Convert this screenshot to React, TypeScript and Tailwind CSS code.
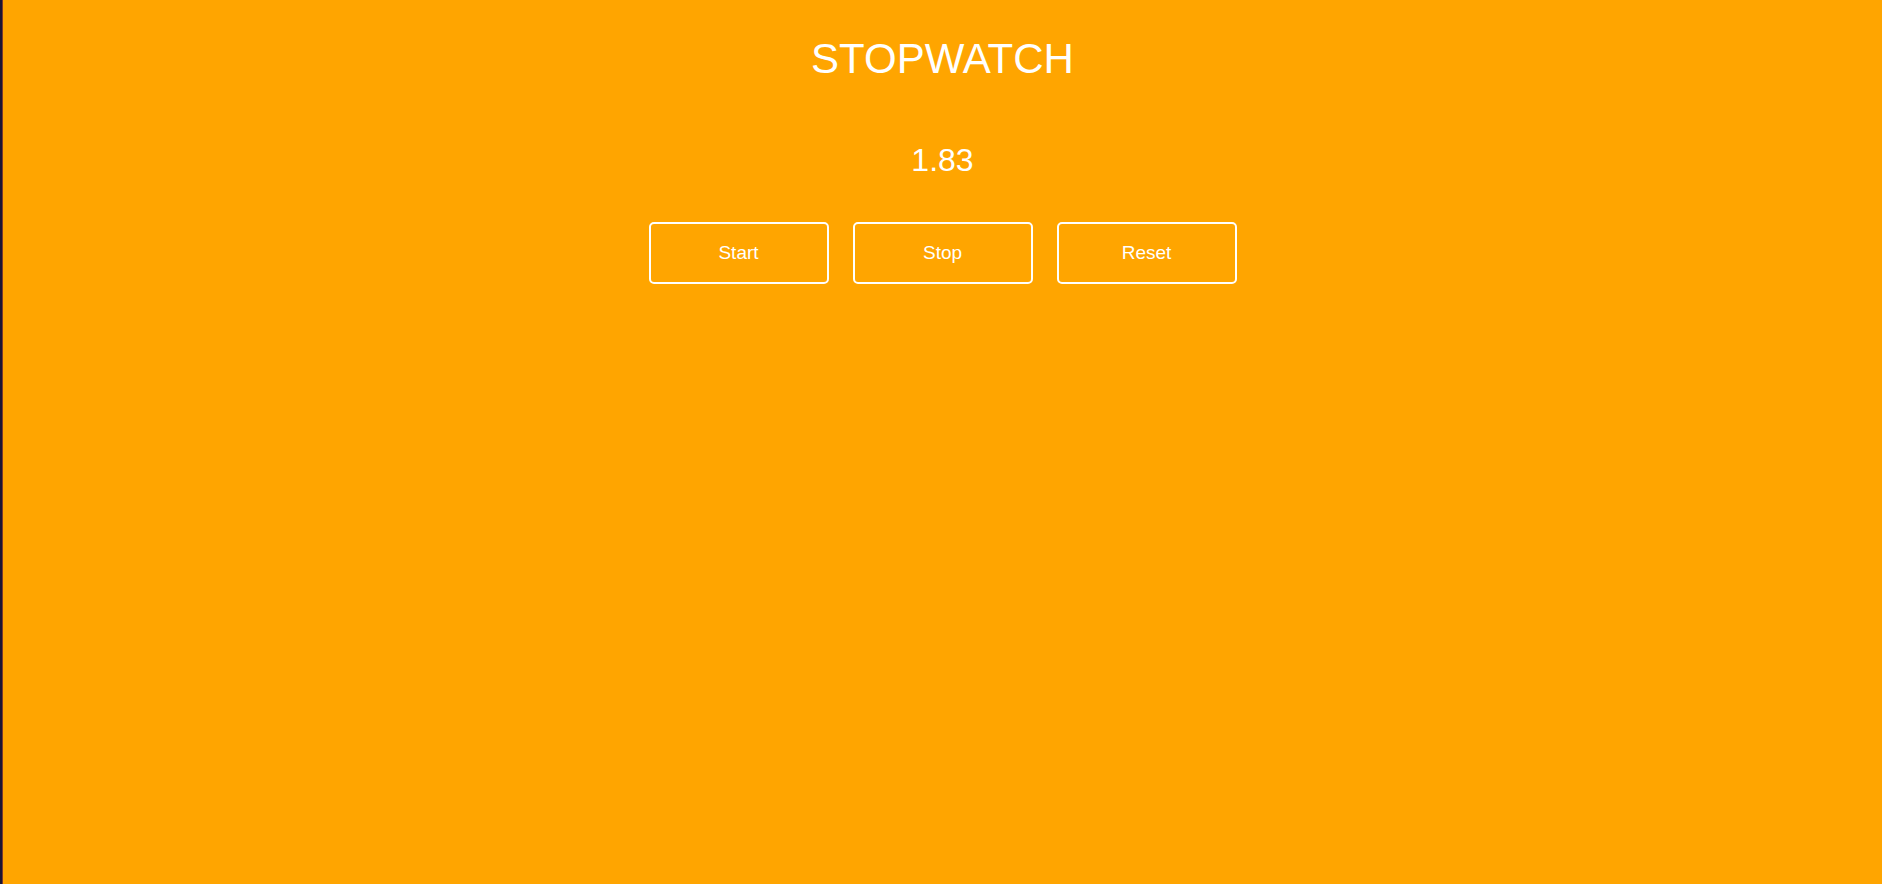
import { useState, useEffect, useRef } from 'react'

export default function App() {
  const [time, setTime] = useState(1.83)
  const [running, setRunning] = useState(false)
  const timer = useRef<number | null>(null)

  useEffect(() => {
    if (running) {
      timer.current = window.setInterval(() => {
        setTime((t) => Math.round((t + 0.01) * 100) / 100)
      }, 10)
    }
    return () => {
      if (timer.current) window.clearInterval(timer.current)
    }
  }, [running])

  const buttonClass =
    'w-[180px] h-[62px] border-2 border-white rounded-[5px] text-white text-[19px] bg-transparent hover:bg-white/10 transition-colors'

  return (
    <div className="min-h-screen flex bg-[#ffa500] font-['Liberation_Sans',Arial,sans-serif]">
      {/* left edge */}
      <div className="w-[2px] bg-[#1c1532]" />
      <div className="w-[1px] bg-[#7a3a2e]" />

      <main className="flex-1 flex flex-col items-center pt-[36px]">
        <h1 className="text-[42px] leading-[46px] text-white">STOPWATCH</h1>

        <p className="mt-[61px] text-[32px] leading-[34px] text-white">{time.toFixed(2)}</p>

        <div className="mt-[45px] flex gap-[24px]">
          <button className={buttonClass} onClick={() => setRunning(true)}>
            Start
          </button>
          <button className={buttonClass} onClick={() => setRunning(false)}>
            Stop
          </button>
          <button
            className={buttonClass}
            onClick={() => {
              setRunning(false)
              setTime(0)
            }}
          >
            Reset
          </button>
        </div>
      </main>
    </div>
  )
}
